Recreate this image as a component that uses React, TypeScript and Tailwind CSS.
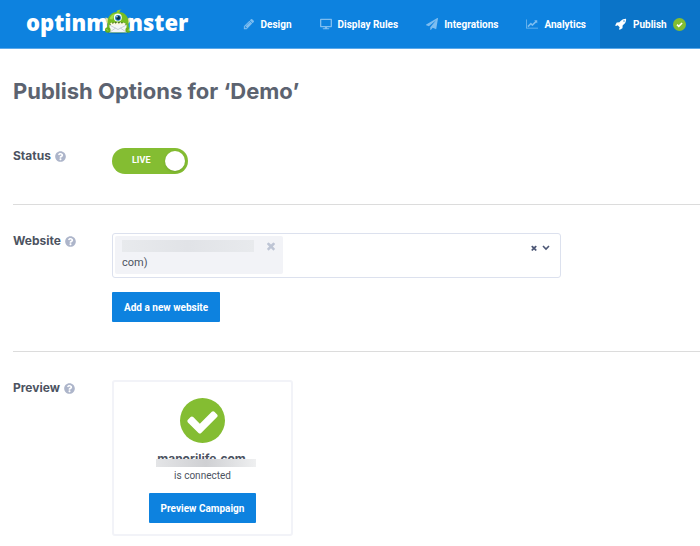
import { useState } from "react";
import type { ReactNode } from "react";
import { FaDesktop, FaQuestionCircle } from "react-icons/fa";

const paths = {
  pencil:
    "M491 1536l91-91-235-235-91 91v107h128v128h107zm523-928q0-22-22-22-10 0-17 7l-542 542q-7 7-7 17 0 22 22 22 10 0 17-7l542-542q7-7 7-17zm-54-192l416 416-832 832h-416v-416zm683 96q0 53-37 90l-166 166-416-416 166-165q36-38 90-38 53 0 91 38l235 234q37 39 37 91z",
  plane:
    "M1764 11q33 24 27 64l-256 1536q-5 29-32 45-14 8-31 8-11 0-24-5l-453-185-242 295q-18 23-49 23-13 0-22-4-19-7-30.5-23.5t-11.5-36.5v-349l864-1059-1069 925-395-162q-37-14-40-55-2-40 32-59l1664-960q15-9 32-9 20 0 36 11z",
  chart:
    "M2048 1536v128h-2048v-1536h128v1408h1920zM1920 288v435q0 21-19.5 29.5t-35.5-7.5l-121-121-633 633q-10 10-23 10t-23-10l-233-233-416 416-192-192 585-585q10-10 23-10t23 10l233 233 464-464-121-121q-16-16-7.5-35.5t29.5-7.5h435q14 0 23 9t9 23z",
  rocket:
    "M1440 448q0-40-28-68t-68-28-68 28-28 68 28 68 68 28 68-28 28-68zm224-288q0 249-75.5 430.5t-253.5 360.5q-81 80-195 176l-20 379q-2 16-16 26l-384 224q-7 4-16 4-12 0-23-9l-64-64q-13-14-8-32l85-276-281-281-276 85q-3 1-9 1-14 0-23-9l-64-64q-17-19-5-39l224-384q10-14 26-16l379-20q96-114 176-195 188-187 358-258t431-71q14 0 24 9.5t10 22.5z",
  times:
    "M1490 1322q0 40-28 68l-136 136q-28 28-68 28t-68-28l-294-294-294 294q-28 28-68 28t-68-28l-136-136q-28-28-28-68t28-68l294-294-294-294q-28-28-28-68t28-68l136-136q28-28 68-28t68 28l294 294 294-294q28-28 68-28t68 28l136 136q28 28 28 68t-28 68l-294 294 294 294q28 28 28 68z",
  check:
    "M1412 734q0-28-18-46l-91-90q-19-19-45-19t-45 19l-408 407-226-226q-19-19-45-19t-45 19l-91 90q-18 18-18 46 0 27 18 45l362 362q19 19 45 19 27 0 46-19l543-543q18-18 18-45z",
};

function Glyph({ d, className, wide }: { d: string; className: string; wide?: boolean }) {
  return (
    <svg viewBox={wide ? "0 0 2048 1792" : "0 0 1792 1792"} fill="currentColor" className={className} aria-hidden="true">
      <path d={d} />
    </svg>
  );
}

function CheckBadge({ className }: { className: string }) {
  return (
    <svg viewBox="128 128 1536 1536" className={className} aria-hidden="true">
      <circle cx="896" cy="896" r="768" fill="#84bd32" />
      <path d={paths.check} fill="#fff" />
    </svg>
  );
}

function SmallCheck() {
  return (
    <svg viewBox="0 0 13 13" className="size-[13px] shrink-0" aria-hidden="true">
      <circle cx="6.5" cy="6.5" r="6.5" fill="#84bd32" />
      <path d="M4 6.600l1.800 1.800 3.300-3.400" fill="none" stroke="#fff" strokeWidth="1.600" />
    </svg>
  );
}

function Monster() {
  return (
    <svg viewBox="0 0 28 26" className="-mr-1 -ml-1 h-[26px] w-7 shrink-0" aria-hidden="true">
      <ellipse cx="14" cy="23.5" rx="11" ry="1.4" fill="#0a5fa8" opacity=".6" />
      <path d="M1.500 8.500c1.500.2 2.800 1 4.200 2.600l-1.500 4C2 13.500 1.200 11.500 1.500 8.500zM26.500 8.500c-1.500.2-2.800 1-4.200 2.600l1.500 4c2.200-1.600 3-3.600 2.700-6.600z" fill="#dfe3a0" />
      <path d="M14 3c-6 0-9.800 3.400-10.300 9L3 21c.5 2 3 2.500 5 2.500h12c2 0 4.500-.5 5-2.500l-.7-9C23.800 6.400 20 3 14 3z" fill="#76bd22" />
      <path d="M12.500 3.600C12.500 1.600 14 .2 17.500.8c-1.800.4-2 1.600-1.900 2.800z" fill="#8ed12e" />
      <path d="M5.500 10c1-3.500 3.500-5.300 7-5.500-2 1-3.600 3-4 6z" fill="#a1df4b" />
      <circle cx="13.800" cy="8.600" r="4" fill="#fff" />
      <circle cx="14" cy="8.800" r="2.900" fill="#1a77b8" />
      <circle cx="14.200" cy="8.900" r="1.800" fill="#0b2c47" />
      <circle cx="13" cy="7.800" r=".7" fill="#fff" />
      <path d="M5.500 15c2-2.300 15-2.300 17 0-.4 2.200-16.600 2.200-17 0z" fill="#42651a" />
      <path d="M6 14.400l1.700-.9 1.200 1.500 1.300-1.800 1.500 1.600 1.600-1.700 1.600 1.700 1.500-1.700 1.500 1.600 1.400-1.300 2.700 1.300-1 1.200H7z" fill="#fbf8df" />
      <path d="M5.500 16h17v7.300h-17z" fill="#f4f6f7" />
      <path d="M5.500 16l8.500 4.500 8.500-4.500M5.500 23.300l6-4.200M22.500 23.300l-6-4.200" fill="none" stroke="#bcc5cc" strokeWidth=".8" />
      <circle cx="3.800" cy="21" r="2.800" fill="#69b01d" />
      <circle cx="24.200" cy="21" r="2.800" fill="#69b01d" />
      <path d="M2.500 20.500l1.800 1M25.500 20.500l-1.800 1" stroke="#a5dc55" strokeWidth="1" />
    </svg>
  );
}

const navItems = [
  { label: "Design", icon: <Glyph d={paths.pencil} className="size-3" /> },
  { label: "Display Rules", icon: <FaDesktop className="size-3" /> },
  { label: "Integrations", icon: <Glyph d={paths.plane} className="size-3" /> },
  { label: "Analytics", icon: <Glyph d={paths.chart} wide className="size-3" /> },
];

function Header() {
  return (
    <header className="flex h-[49px] justify-between border-b border-[#5ba9ea] bg-[#0d82df] text-white">
      <a href="#" aria-label="optinmonster" className="flex items-center pb-1 pl-[26px] font-['Open_Sans',sans-serif] text-[22px] leading-none font-extrabold">
        <span>optinm</span>
        <Monster />
        <span>nster</span>
      </a>
      <nav className="flex items-stretch text-[10px] font-bold">
        <div className="flex gap-7 pr-[14px]">
          {navItems.map((item) => (
            <a key={item.label} href="#" className="flex items-center gap-1.5 whitespace-nowrap">
              <span className="text-[#7dbdf0]">{item.icon}</span>
              {item.label}
            </a>
          ))}
        </div>
        <a href="#" aria-current="page" className="flex w-[100px] items-center gap-1.5 bg-[#0b74c8] pr-[14px] pl-[15px]">
          <Glyph d={paths.rocket} className="size-3 shrink-0" />
          <span className="flex-1">Publish</span>
          <SmallCheck />
        </a>
      </nav>
    </header>
  );
}

function Row({ label, htmlFor, className, children }: { label: string; htmlFor?: string; className: string; children: ReactNode }) {
  return (
    <section className={`flex items-start ${className}`}>
      <div className="flex w-[99px] shrink-0 items-center gap-1 font-['Inter',sans-serif] text-[12px] leading-4 font-bold">
        <label htmlFor={htmlFor}>{label}</label>
        <button type="button" aria-label={`Help: ${label}`}>
          <FaQuestionCircle className="size-[11px] text-[#adb5ca]" />
        </button>
      </div>
      {children}
    </section>
  );
}

export default function App() {
  const [live, setLive] = useState(true);

  return (
    <div className="min-h-screen bg-white font-['Roboto','Liberation_Sans',sans-serif] text-[#4c5361]">
      <Header />
      <main className="pl-[13px]">
        <h1 className="pt-7 font-['Inter',sans-serif] text-[22px] leading-7 font-bold text-[#5c6370]">Publish Options for ‘Demo’</h1>

        <Row label="Status" htmlFor="status" className="border-b border-[#dcdcdc] pt-[43px] pb-[30px]">
          <label
            className={`flex h-[26px] w-[76px] cursor-pointer items-center justify-between rounded-full pr-[3px] pl-5 text-[9px] font-bold text-white ${
              live ? "bg-[#84bd32]" : "flex-row-reverse bg-[#adb5ca]"
            }`}
          >
            <input id="status" type="checkbox" role="switch" checked={live} onChange={(e) => setLive(e.target.checked)} className="sr-only" />
            {live ? "LIVE" : "OFF"}
            <span className="size-5 rounded-full bg-white shadow-sm" />
          </label>
        </Row>

        <Row label="Website" htmlFor="website" className="border-b border-[#dcdcdc] pt-7 pb-[29px]">
          <div className="mr-4 max-w-[449px] flex-1">
            <div className="flex h-[45px] items-start rounded-[3px] border border-[#dce1ee] p-0.5">
              <div className="flex h-[38px] w-[168px] justify-between rounded-xs bg-[#f2f3f7] pt-1 pr-1.5 pl-[7px] text-[11px]">
                <div>
                  <div className="h-3 w-[132px] bg-linear-to-r from-[#e8eaed] via-[#e1e3e7] to-[#e8eaed]" />
                  <div className="mt-0.5 leading-[18px]">com)</div>
                </div>
                <button type="button" aria-label="Remove website" className="flex h-3 items-center text-[#bec5d5]">
                  <Glyph d={paths.times} className="size-3" />
                </button>
              </div>
              <input id="website" type="text" className="h-9 min-w-0 flex-1 outline-none" />
              <div className="flex items-center gap-1 pt-2 pr-2 text-[#4c5675]">
                <button type="button" aria-label="Clear all">
                  <Glyph d={paths.times} className="size-2" />
                </button>
                <button type="button" aria-label="Open list">
                  <svg viewBox="0 0 8 6" className="h-1.5 w-2" fill="none" stroke="currentColor" strokeWidth="1.600">
                    <path d="M1 1l3 3 3-3" />
                  </svg>
                </button>
              </div>
            </div>
            <button type="button" className="mt-[14px] h-[30px] rounded-[1px] bg-[#0d82df] px-3 text-[10px] font-bold whitespace-nowrap text-white">
              Add a new website
            </button>
          </div>
        </Row>

        <Row label="Preview" className="pt-7 pb-2">
          <div className="flex h-[156px] w-[181px] flex-col items-center rounded-[3px] border-2 border-[#f2f3f8] pt-4">
            <CheckBadge className="size-[45px]" />
            <div className="relative mt-2 ml-1.5 w-[100px] pr-2 text-center font-['Inter',sans-serif] text-[12px] leading-4 font-bold">
              manorilife.com
              <span className="absolute inset-x-0 bottom-0 h-2 bg-linear-to-r from-[#e4e5e7] via-[#cfd0d3] to-[#eff0f1]" />
            </div>
            <div className="mt-0.5 text-[10px] leading-[14px]">is connected</div>
            <button type="button" className="mt-2.5 h-[30px] rounded-[1px] bg-[#0d82df] px-3 text-[10px] font-bold whitespace-nowrap text-white">
              Preview Campaign
            </button>
          </div>
        </Row>
      </main>
    </div>
  );
}
